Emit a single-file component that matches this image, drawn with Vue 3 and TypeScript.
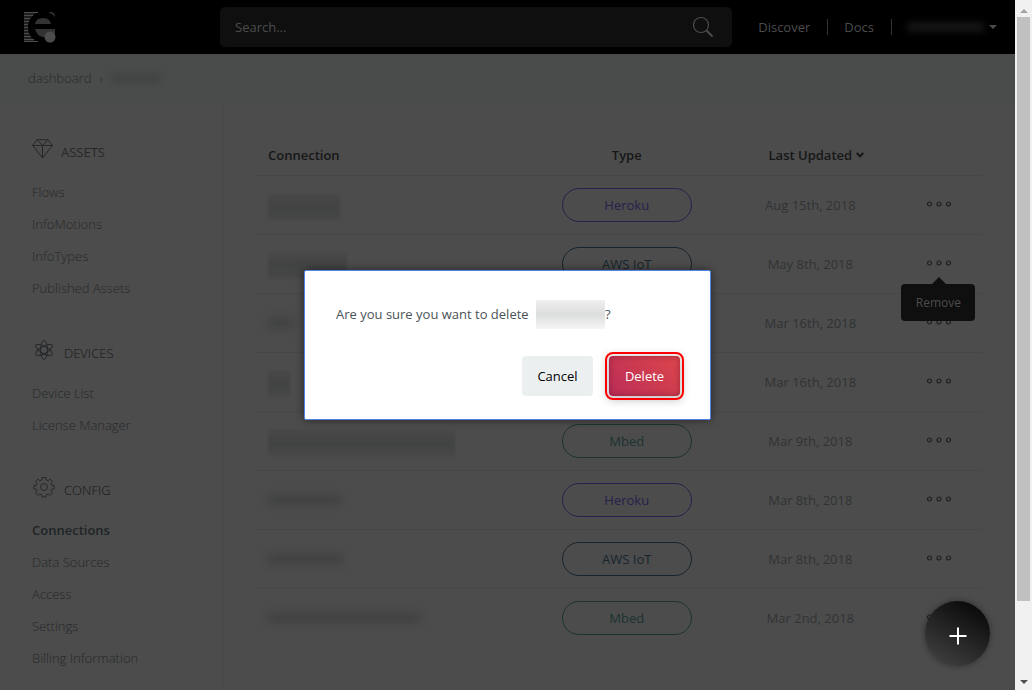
<script setup lang="ts">
type IconName = 'gem' | 'atom' | 'gear'
type ServiceType = 'Heroku' | 'AWS IoT' | 'Mbed'

interface MenuGroup {
  title: string
  icon: IconName
  items: string[]
}

interface Connection {
  id: number
  maskWidth: number
  boxed: boolean
  type?: ServiceType
  updated: string
}

const groups: MenuGroup[] = [
  { title: 'ASSETS', icon: 'gem', items: ['Flows', 'InfoMotions', 'InfoTypes', 'Published Assets'] },
  { title: 'DEVICES', icon: 'atom', items: ['Device List', 'License Manager'] },
  { title: 'CONFIG', icon: 'gear', items: ['Connections', 'Data Sources', 'Access', 'Settings', 'Billing Information'] },
]
const current = 'Connections'

const connections: Connection[] = [
  { id: 1, maskWidth: 72, boxed: true, type: 'Heroku', updated: 'Aug 15th, 2018' },
  { id: 2, maskWidth: 79, boxed: true, type: 'AWS IoT', updated: 'May 8th, 2018' },
  { id: 3, maskWidth: 26, boxed: false, updated: 'Mar 16th, 2018' },
  { id: 4, maskWidth: 22, boxed: true, updated: 'Mar 16th, 2018' },
  { id: 5, maskWidth: 187, boxed: true, type: 'Mbed', updated: 'Mar 9th, 2018' },
  { id: 6, maskWidth: 74, boxed: false, type: 'Heroku', updated: 'Mar 8th, 2018' },
  { id: 7, maskWidth: 75, boxed: false, type: 'AWS IoT', updated: 'Mar 8th, 2018' },
  { id: 8, maskWidth: 152, boxed: false, type: 'Mbed', updated: 'Mar 2nd, 2018' },
]
const openMenuId = 2

const typeClass: Record<ServiceType, string> = {
  Heroku: 'heroku',
  'AWS IoT': 'aws',
  Mbed: 'mbed',
}
const logoStripes = [
  { y: 0, w: 14 }, { y: 3, w: 9 }, { y: 6, w: 6 }, { y: 9, w: 5 }, { y: 12, w: 4 }, { y: 15, w: 4 },
  { y: 18, w: 4 }, { y: 21, w: 5 }, { y: 24, w: 7 }, { y: 27, w: 10 }, { y: 29, w: 14 },
]
</script>

<template>
  <div class="window">
    <div class="page">
      <header class="topbar">
        <a class="logo" href="#" aria-label="Home">
          <svg width="33" height="31" viewBox="0 0 33 31">
            <path d="M0 1H12Q5 5 4 14Q4 25 12 30H0Z" fill="#1e1e1e" />
            <rect v-for="s in logoStripes" :key="s.y" x="0" :y="s.y" :width="s.w" height="1" fill="#4c4c4c" />
            <path d="M24 0h4q3 1 3 5q-2-3-7-5z" fill="#303030" />
            <path d="M11 12q1-6 8-6t8 6z" fill="#333" />
            <path d="M11 17h20v5l-7 3h-5q-6-1-8-8z" fill="#333" />
            <circle cx="26" cy="25" r="5.500" fill="#4c4c4c" />
          </svg>
        </a>
        <form class="search" role="search" @submit.prevent>
          <input type="text" placeholder="Search..." aria-label="Search" />
          <button type="submit" aria-label="Search">
            <svg width="22" height="22" viewBox="0 0 22 22" fill="none" stroke="#4c4c4c">
              <circle cx="9" cy="9" r="7.500" stroke-width="1.200" />
              <path d="M14.500 14.500L20.500 20.500" stroke-width="2" />
            </svg>
          </button>
        </form>
        <nav class="links">
          <a href="#">Discover</a>
          <a href="#">Docs</a>
          <button type="button" class="user" aria-label="Account">
            <span class="user-mask"></span>
            <span class="caret"></span>
          </button>
        </nav>
      </header>

      <nav class="crumbs" aria-label="Breadcrumb">
        <a href="#">dashboard</a>
        <span>›</span>
        <span class="crumb-mask"></span>
      </nav>

      <div class="body">
        <aside class="sidebar">
          <section v-for="g in groups" :key="g.title" class="group">
            <h2>
              <svg v-if="g.icon === 'gem'" width="21" height="20" viewBox="0 0 21 20" fill="none" stroke="#25282a" stroke-linejoin="round">
                <path d="M5 .7H16L20.300 6.500L10.500 19L.700 6.500ZM.700 6.500H20.300M10.500 6.500V19M5 .7L10.500 6.500L16 .7" />
              </svg>
              <svg v-else-if="g.icon === 'atom'" width="24" height="22" viewBox="0 0 24 22" fill="none" stroke="#25282a">
                <ellipse cx="12" cy="11" rx="3.500" ry="9.500" />
                <ellipse cx="12" cy="11" rx="3.500" ry="9.500" transform="rotate(60 12 11)" />
                <ellipse cx="12" cy="11" rx="3.500" ry="9.500" transform="rotate(-60 12 11)" />
              </svg>
              <svg v-else width="24" height="22" viewBox="0 0 24 22" fill="none" stroke="#25282a" stroke-linejoin="round">
                <path d="M10 1.500h4v2.300l2.200.9 1.700-1.600 2.700 2.700-1.600 1.700.9 2h2.100v3.500h-2.100l-.9 2.200 1.600 1.700-2.700 2.700-1.700-1.600-2.200.9v2.100h-4v-2.100l-2.200-.9-1.700 1.600-2.700-2.700 1.600-1.700-.9-2.200H2v-3.500h2.100l.9-2-1.600-1.700 2.700-2.700 1.700 1.600 2.200-.9z" />
                <circle cx="12" cy="11" r="3.500" />
              </svg>
              {{ g.title }}
            </h2>
            <ul>
              <li v-for="item in g.items" :key="item">
                <a href="#" :class="{ active: item === current }">{{ item }}</a>
              </li>
            </ul>
          </section>
        </aside>

        <main class="content">
          <table>
            <colgroup>
              <col class="c-name" />
              <col class="c-type" />
              <col class="c-date" />
              <col class="c-menu" />
            </colgroup>
            <thead>
              <tr>
                <th class="name" scope="col">Connection</th>
                <th scope="col">Type</th>
                <th scope="col">
                  <button type="button" class="sort">
                    Last Updated
                    <svg width="8" height="6" viewBox="0 0 8 6" fill="none" stroke="#161718" stroke-width="2">
                      <path d="M.700 1L4 4.300L7.300 1" />
                    </svg>
                  </button>
                </th>
                <td></td>
              </tr>
            </thead>
            <tbody>
              <tr v-for="c in connections" :key="c.id">
                <td class="name">
                  <span class="mask" :class="{ boxed: c.boxed }" :style="{ width: c.maskWidth + 'px' }"></span>
                </td>
                <td><span v-if="c.type" class="pill" :class="typeClass[c.type]">{{ c.type }}</span></td>
                <td class="date">{{ c.updated }}</td>
                <td>
                  <div class="menu">
                    <button type="button" class="dots" aria-label="Actions">
                      <svg width="26" height="8" viewBox="0 0 26 8" fill="none" stroke="#1e2021" stroke-width="1.200">
                        <circle cx="3.500" cy="4" r="2" />
                        <circle cx="13" cy="4" r="2" />
                        <circle cx="22.500" cy="4" r="2" />
                      </svg>
                    </button>
                    <button v-if="c.id === openMenuId" type="button" class="tip">Remove</button>
                  </div>
                </td>
              </tr>
            </tbody>
          </table>
        </main>
      </div>

      <button type="button" class="fab" aria-label="Add connection">
        <svg width="18" height="18" viewBox="0 0 18 18" stroke="#fff" stroke-width="2">
          <path d="M9 .5V17.500M.500 9H17.500" />
        </svg>
      </button>

      <div class="layer">
        <div class="dialog" role="dialog" aria-modal="true" aria-labelledby="dialog-text">
          <p id="dialog-text">Are you sure you want to delete <span class="target"></span>?</p>
          <div class="actions">
            <button type="button" class="cancel">Cancel</button>
            <button type="button" class="delete">Delete</button>
          </div>
        </div>
      </div>
    </div>

    <div class="scrollbar" aria-hidden="true">
      <span class="arrow up"></span>
      <span class="thumb"></span>
      <span class="arrow down"></span>
    </div>
  </div>
</template>

<style>
body {
  margin: 0;
  background: #4c4c4c;
}
</style>

<style scoped>
* {
  box-sizing: border-box;
}
.window {
  display: flex;
  height: 100vh;
  font-family: "Open Sans", "Noto Sans", sans-serif;
  font-size: 13px;
  line-height: 20px;
  color: #25282a;
}
button,
input {
  font: inherit;
  color: inherit;
  border: 0;
  padding: 0;
  background: none;
}
a {
  color: inherit;
  text-decoration: none;
}
svg {
  display: block;
  flex: none;
}
.page {
  position: relative;
  flex: 1;
  min-width: 0;
  overflow: hidden;
  background: #4c4c4c;
}
.topbar {
  display: flex;
  align-items: center;
  height: 54px;
  padding: 0 18px 0 24px;
  background: #000;
  color: #4c4c4c;
}
.logo {
  width: 196px;
}
.search {
  display: flex;
  align-items: center;
  flex: 1;
  height: 40px;
  padding: 0 18px 0 15px;
  border-radius: 5px;
  background: #0f0f0f;
}
.search input {
  flex: 1;
  min-width: 0;
  outline: 0;
}
.search input::placeholder {
  color: #4c4c4c;
  opacity: 1;
}
.links {
  display: flex;
  align-items: center;
  margin-left: 26px;
}
.links a {
  padding-right: 17px;
  margin-right: 16px;
  line-height: 16px;
  border-right: 1px solid #333;
}
.user {
  display: flex;
  align-items: center;
  gap: 5px;
}
.user-mask {
  width: 76px;
  height: 10px;
  background: #151515;
  filter: blur(3px);
}
.caret {
  border: 4px solid transparent;
  border-top-color: #4c4c4c;
  border-bottom: 0;
}
.crumbs {
  display: flex;
  align-items: center;
  gap: 8px;
  height: 49px;
  padding: 0 28px;
  background: #4a4c4b;
  border-bottom: 1px solid #484848;
  font-weight: 300;
}
.crumb-mask {
  width: 50px;
  height: 10px;
  background: #424443;
  filter: blur(3px);
}
.body {
  display: flex;
}
.sidebar {
  flex: none;
  width: 224px;
  padding: 25px 32px;
  border-right: 1px solid #494949;
  font-weight: 300;
}
.group {
  margin-bottom: 25px;
}
.group h2 {
  display: flex;
  align-items: center;
  gap: 8px;
  height: 48px;
  margin: 0;
  font-size: 13px;
  font-weight: 300;
  color: #161718;
}
.group:first-child h2 {
  font-weight: 400;
  color: #25282a;
}
.group h2 svg {
  margin-bottom: 6px;
}
.group ul {
  margin: 0;
  padding: 0;
  list-style: none;
}
.group li {
  line-height: 32px;
}
.active {
  font-weight: 600;
  color: #202426;
}
.content {
  flex: 1;
  min-width: 0;
  padding: 32px;
}
table {
  width: 100%;
  table-layout: fixed;
  border-collapse: separate;
  border-spacing: 0;
  text-align: center;
}
.c-name {
  width: 37.5%;
}
.c-type {
  width: 27%;
}
.c-date {
  width: 23.5%;
}
.c-menu {
  width: 12%;
}
th,
td {
  height: 59px;
  padding: 0;
  border-bottom: 1px solid #474747;
  vertical-align: middle;
}
thead th,
thead td {
  height: 41px;
  font-weight: 600;
  color: #161718;
}
tbody tr:last-child td {
  border-bottom-color: #4c4c4c;
}
.name {
  padding-left: 12px;
  text-align: left;
}
.sort {
  display: inline-flex;
  align-items: center;
  gap: 4px;
  padding-left: 12px;
}
.mask {
  display: block;
  height: 10px;
  background: #3f4140;
  filter: blur(4px);
}
.mask.boxed {
  height: 26px;
  margin-top: 3px;
  background: linear-gradient(#484848, #424343 50%, #484848);
  filter: blur(1px);
}
.pill {
  display: block;
  width: 130px;
  margin: 0 auto;
  line-height: 32px;
  border: 1px solid;
  border-radius: 17px;
}
.heroku {
  color: #27204b;
}
.aws {
  color: #17242d;
}
.mbed {
  color: #1c3332;
}
.date {
  color: #303335;
}
.menu {
  position: relative;
  padding-bottom: 3px;
}
.dots {
  display: block;
  margin: 0 auto;
}
.tip {
  position: absolute;
  z-index: 1;
  top: 25px;
  left: 50%;
  width: 74px;
  margin-left: -38px;
  line-height: 37px;
  border-radius: 4px;
  background: #0f0f0f;
  color: #4c4c4c;
  font-size: 12px;
}
.tip::before {
  content: "";
  position: absolute;
  top: -7px;
  left: 50%;
  margin-left: -6px;
  border: 7px solid transparent;
  border-top: 0;
  border-bottom-color: #0f0f0f;
}
.fab {
  position: absolute;
  right: 25px;
  bottom: 24px;
  display: grid;
  place-items: center;
  width: 65px;
  height: 65px;
  padding-top: 4px;
  border-radius: 50%;
  background: linear-gradient(30deg, #454545, #020202);
  box-shadow: 0 0 6px rgba(0, 0, 0, 0.4);
}
.layer {
  position: absolute;
  inset: 0;
  display: grid;
  place-items: center;
}
.dialog {
  width: 407px;
  padding: 33px 30px 23px 31px;
  border: 1px solid #4f83e8;
  border-radius: 2px;
  background: #fff;
  box-shadow: 0 0 8px rgba(0, 0, 0, 0.5);
}
.dialog p {
  display: flex;
  align-items: center;
  height: 20px;
  margin: 0;
  color: #4a5257;
  white-space: pre;
}
.target {
  width: 69px;
  height: 29px;
  margin-left: 4px;
  background: linear-gradient(#f0f0f0, #dcdddd 50%, #f6f6f6);
}
.actions {
  display: flex;
  justify-content: flex-end;
  gap: 16px;
  margin-top: 32px;
}
.actions button {
  width: 71px;
  height: 40px;
  border-radius: 4px;
}
.actions .cancel {
  background: #ebeff0;
  color: #000;
}
.actions .delete {
  background: linear-gradient(45deg, #bb2d57, #dc464b);
  color: #fff;
  box-shadow: inset 0 0 6px rgba(80, 0, 30, 0.4), 0 2px 10px 2px rgba(0, 0, 0, 0.25);
  outline: 2px solid #f00;
  outline-offset: 2px;
}
.scrollbar {
  display: flex;
  flex-direction: column;
  align-items: center;
  justify-content: space-between;
  flex: none;
  width: 17px;
  padding: 9px 0 6px;
  background: #f1f1f1;
}
.arrow {
  border: 4px solid transparent;
}
.up {
  border-top: 0;
  border-bottom-color: #a3a3a3;
}
.down {
  border-bottom: 0;
  border-top-color: #505050;
}
.thumb {
  flex: 1;
  width: 13px;
  margin: 4px 0 79px;
  background: #c1c1c1;
}
</style>
